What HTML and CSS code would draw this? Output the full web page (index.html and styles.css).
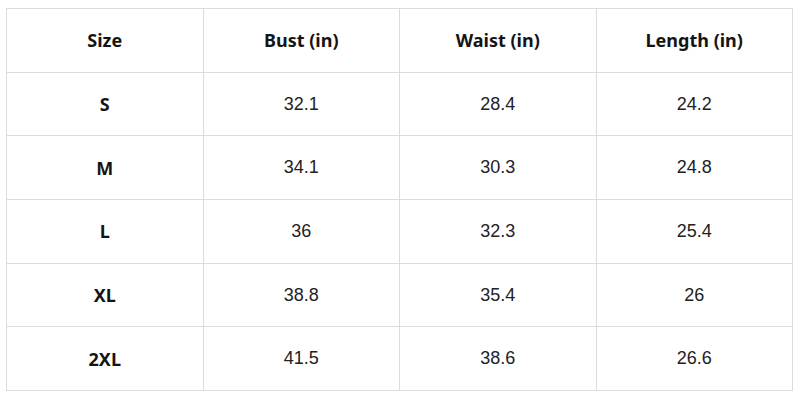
FILE: index.html
```html
<!DOCTYPE html>
<html>
<head>
<meta charset="utf-8">
<link rel="stylesheet" href="styles.css">
</head>
<body>
<table class="size-table">
  <thead>
    <tr><th>Size</th><th>Bust (in)</th><th>Waist (in)</th><th>Length (in)</th></tr>
  </thead>
  <tbody>
    <tr><th>S</th><td>32.1</td><td>28.4</td><td>24.2</td></tr>
    <tr><th>M</th><td>34.1</td><td>30.3</td><td>24.8</td></tr>
    <tr><th>L</th><td>36</td><td>32.3</td><td>25.4</td></tr>
    <tr><th>XL</th><td>38.8</td><td>35.4</td><td>26</td></tr>
    <tr><th>2XL</th><td>41.5</td><td>38.6</td><td>26.6</td></tr>
  </tbody>
</table>
</body>
</html>
```
FILE: styles.css
```css
html, body {
  margin: 0;
  padding: 0;
  background: #fff;
}
body {
  padding: 8px 7px 0 6px;
}
.size-table {
  width: 787px;
  border-collapse: collapse;
  table-layout: fixed;
}
.size-table th,
.size-table td {
  border: 1px solid #dcdcdc;
  height: 62.7px;
  padding: 0;
  text-align: center;
  vertical-align: middle;
  color: #141414;
}
.size-table th {
  font-family: "Noto Sans", Inter, sans-serif;
  font-weight: 700;
  font-size: 18px;
}
.size-table td {
  font-family: "Liberation Sans", Arial, sans-serif;
  font-size: 18px;
  font-weight: 400;
  color: #222;
}
```
